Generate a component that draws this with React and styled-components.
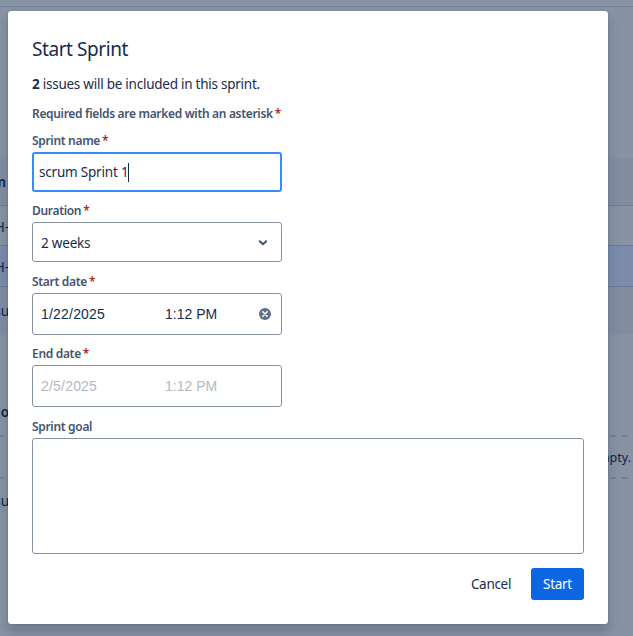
import React from "react";
import styled, { createGlobalStyle } from "styled-components";

const Global = createGlobalStyle`
  * { box-sizing: border-box; }
  html, body { margin: 0; height: 636px; overflow: hidden; }
  body { font-family: "Noto Sans", "Open Sans", sans-serif; font-size: 14px; color: #172b4d; }
`;

const Screen = styled.div`
  position: relative;
  width: 633px;
  height: 636px;
  overflow: hidden;
  background: #8792a2;
`;

const Board = styled.div`
  display: flex;
  flex-direction: column;
  height: 636px;
  color: #0e2350;
`;

const TopBar = styled.div`
  height: 7px;
  border-bottom: 1px solid #738097;
`;

const Band = styled.div`
  display: flex;
  align-items: center;
  justify-content: space-between;
  height: ${(p) => p.$height}px;
  padding-top: ${(p) => p.$shift || 0}px;
  background: ${(p) => p.$bg || "transparent"};
  border-bottom: ${(p) => (p.$line ? "1px solid #6d7c96" : "0")};
`;

const Clip = styled.span`
  display: flex;
  justify-content: flex-end;
  width: ${(p) => p.$width || 9}px;
  overflow: hidden;
  white-space: nowrap;
  line-height: 20px;
  font-weight: ${(p) => (p.$bold ? 600 : 400)};
  font-size: 13.5px;
`;

const EmptyDrop = styled(Band)`
  border: 0;
  background:
    repeating-linear-gradient(90deg, #748195 0 6px, transparent 6px 12px) -2px 0 / 100% 2px no-repeat,
    repeating-linear-gradient(90deg, #748195 0 6px, transparent 6px 12px) -2px 100% / 100% 2px no-repeat;
`;

const Message = styled.span`
  font-size: 12.5px;
  line-height: 20px;
  margin-right: 2px;
`;

const Dialog = styled.section`
  position: absolute;
  left: 8px;
  top: 11px;
  width: 600px;
  height: 613px;
  padding: 24px;
  border-radius: 3px;
  background: #fff;
  box-shadow: 0 0 1px rgba(9, 30, 66, 0.5), 0 8px 12px rgba(9, 30, 66, 0.2);
  display: flex;
  flex-direction: column;
`;

const Title = styled.h1`
  margin: 0;
  height: 28px;
  line-height: 28px;
  font-size: 19px;
  font-weight: 400;
  letter-spacing: -0.43px;
`;

const Summary = styled.p`
  margin: 11px 0 0;
  height: 20px;
  line-height: 20px;
  font-size: 13.5px;
  letter-spacing: -0.25px;
`;

const Label = styled.label`
  display: block;
  height: 16px;
  line-height: 16px;
  margin-top: ${(p) => p.$gap}px;
  font-size: 12px;
  font-weight: 600;
  color: #44546f;
  letter-spacing: -0.32px;
  white-space: nowrap;
`;

const Star = styled.span`
  color: #ae2a19;
  margin-left: 2px;
`;

const Field = styled.div`
  display: flex;
  align-items: center;
  width: 250px;
  height: ${(p) => p.$height}px;
  margin-top: 3px;
  padding: ${(p) => p.$shift || 0}px ${(p) => (p.$focus ? 5 : 8)}px 0;
  border: ${(p) => (p.$focus ? "2px solid #388bff" : "1px solid #8590a2")};
  border-radius: 3px;
  color: ${(p) => (p.$disabled ? "#b3b9c4" : "#172b4d")};
`;

const Value = styled.span`
  font-size: 13.5px;
  line-height: 20px;
  letter-spacing: -0.2px;
`;

const Caret = styled.i`
  width: 1px;
  height: 19px;
  background: #172b4d;
`;

const DatePart = styled.span`
  width: 124px;
  font-family: "Liberation Sans", Arial, sans-serif;
  font-size: 14px;
  line-height: 20px;
  letter-spacing: 0.2px;
`;

const TimePart = styled(DatePart)`
  width: 94px;
  letter-spacing: 0;
`;

const ArrowIcon = styled.svg`
  width: 10px;
  height: 6px;
  margin-left: auto;
  margin-right: 5px;
`;

const ClearIcon = styled.svg`
  width: 12px;
  height: 12px;
`;

const Goal = styled.div`
  width: 552px;
  height: 116px;
  margin-top: 3px;
  border: 1px solid #8590a2;
  border-radius: 3px;
`;

const Footer = styled.footer`
  display: flex;
  justify-content: flex-end;
  gap: 4px;
  margin-top: 14px;
`;

const Button = styled.button`
  height: 32px;
  width: ${(p) => p.$width}px;
  padding: 0;
  border: 0;
  border-radius: 3px;
  font: 400 13.5px/20px "Noto Sans", sans-serif;
  letter-spacing: -0.3px;
  color: ${(p) => (p.$primary ? "#fff" : "#172b4d")};
  background: ${(p) => (p.$primary ? "#0c66e4" : "transparent")};
`;

function Required() {
  return <Star>*</Star>;
}

export default function App() {
  return (
    <Screen>
      <Global />
      <Board>
        <TopBar />
        <Band $height={152} />
        <Band $height={47} $bg="#828da0" $line><Clip $bold $width={6}>m</Clip></Band>
        <Band $height={40} $shift={2} $line><Clip>H-</Clip></Band>
        <Band $height={41} $shift={2} $bg="#7b8cab" $line><Clip>H-</Clip></Band>
        <Band $height={48} $bg="#828da0"><Clip>su</Clip></Band>
        <Band $height={53} />
        <Band $height={47}><Clip $bold>o</Clip></Band>
        <EmptyDrop $height={44} $shift={2}><span /><Message>empty.</Message></EmptyDrop>
        <Band $height={43}><Clip>su</Clip></Band>
      </Board>

      <Dialog role="dialog" aria-label="Start Sprint">
        <Title>Start Sprint</Title>
        <Summary><b>2</b> issues will be included in this sprint.</Summary>
        <Label $gap={12}>Required fields are marked with an asterisk<Required /></Label>
        <Label $gap={11}>Sprint name<Required /></Label>
        <Field $height={40} $focus><Value>scrum Sprint 1</Value><Caret /></Field>
        <Label $gap={11}>Duration<Required /></Label>
        <Field $height={40} $shift={2}>
          <Value>2 weeks</Value>
          <ArrowIcon viewBox="0 0 10 6">
            <path d="M1.8 1.2L5 4.2l3.2-3" fill="none" stroke="#44546f" strokeWidth="2" strokeLinecap="round" strokeLinejoin="round" />
          </ArrowIcon>
        </Field>
        <Label $gap={12}>Start date<Required /></Label>
        <Field $height={42}>
          <DatePart>1/22/2025</DatePart>
          <TimePart>1:12 PM</TimePart>
          <ClearIcon viewBox="0 0 12 12">
            <circle cx="6" cy="6" r="6" fill="#626f86" />
            <path d="M3.8 3.8l4.4 4.4M8.2 3.8L3.8 8.2" stroke="#fff" strokeWidth="1.6" strokeLinecap="round" />
          </ClearIcon>
        </Field>
        <Label $gap={11}>End date<Required /></Label>
        <Field $height={42} $disabled>
          <DatePart>2/5/2025</DatePart>
          <TimePart>1:12 PM</TimePart>
        </Field>
        <Label $gap={12}>Sprint goal</Label>
        <Goal />
        <Footer>
          <Button $width={72}>Cancel</Button>
          <Button $width={53} $primary>Start</Button>
        </Footer>
      </Dialog>
    </Screen>
  );
}
